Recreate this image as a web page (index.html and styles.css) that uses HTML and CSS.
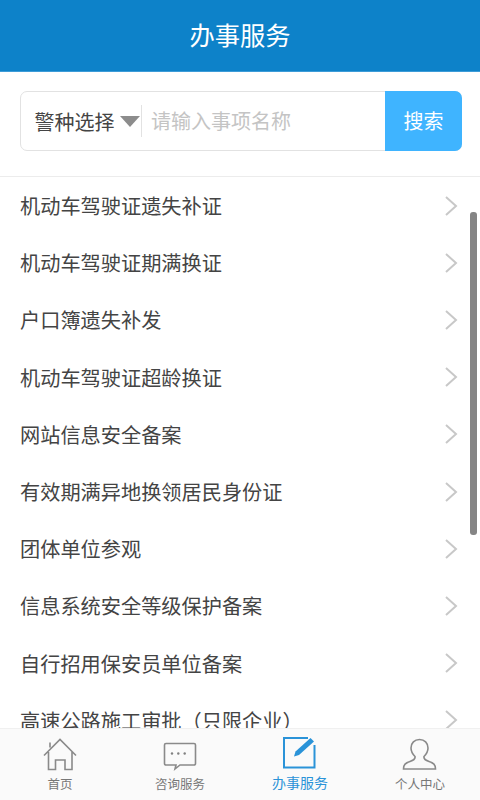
FILE: index.html
```html
<!DOCTYPE html>
<html lang="zh-CN">
<head>
<meta charset="utf-8">
<title>办事服务</title>
<link rel="stylesheet" href="styles.css">
</head>
<body>
<div class="app">
  <header class="topbar">办事服务</header>
  <section class="search-wrap">
    <form class="search">
      <div class="picker">
        <span>警种选择</span>
        <i class="caret"></i>
      </div>
      <div class="placeholder">请输入事项名称</div>
      <div class="search-btn">搜索</div>
    </form>
  </section>
  <ul class="list">
    <li>机动车驾驶证遗失补证<svg class="chev" viewBox="0 0 14 22"><path d="M2 2l10 9-10 9"/></svg></li>
    <li>机动车驾驶证期满换证<svg class="chev" viewBox="0 0 14 22"><path d="M2 2l10 9-10 9"/></svg></li>
    <li>户口簿遗失补发<svg class="chev" viewBox="0 0 14 22"><path d="M2 2l10 9-10 9"/></svg></li>
    <li>机动车驾驶证超龄换证<svg class="chev" viewBox="0 0 14 22"><path d="M2 2l10 9-10 9"/></svg></li>
    <li>网站信息安全备案<svg class="chev" viewBox="0 0 14 22"><path d="M2 2l10 9-10 9"/></svg></li>
    <li>有效期满异地换领居民身份证<svg class="chev" viewBox="0 0 14 22"><path d="M2 2l10 9-10 9"/></svg></li>
    <li>团体单位参观<svg class="chev" viewBox="0 0 14 22"><path d="M2 2l10 9-10 9"/></svg></li>
    <li>信息系统安全等级保护备案<svg class="chev" viewBox="0 0 14 22"><path d="M2 2l10 9-10 9"/></svg></li>
    <li>自行招用保安员单位备案<svg class="chev" viewBox="0 0 14 22"><path d="M2 2l10 9-10 9"/></svg></li>
    <li>高速公路施工审批（只限企业）<svg class="chev" viewBox="0 0 14 22"><path d="M2 2l10 9-10 9"/></svg></li>
  </ul>
  <div class="scrollbar"></div>
  <nav class="tabs">
    <a class="tab">
      <svg class="tab-icon" viewBox="0 0 36 36"><path d="M2 18.500L18 2.500l16 16M8 10.500V5.500M6.500 15V32.500h7V23h9.500v9.500h7V15"/></svg>
      <span>首页</span>
    </a>
    <a class="tab">
      <svg class="tab-icon" viewBox="0 0 36 36"><path d="M4 6.500h28a1.500 1.500 0 0 1 1.500 1.500v18.500a1.500 1.500 0 0 1-1.500 1.500H18l-5 4 1-4H4a1.500 1.500 0 0 1-1.500-1.500V8A1.500 1.500 0 0 1 4 6.500z"/><circle class="dot" cx="10" cy="16.500" r="1.200"/><circle class="dot" cx="16.300" cy="16.500" r="1.200"/><circle class="dot" cx="22.700" cy="16.500" r="1.200"/></svg>
      <span>咨询服务</span>
    </a>
    <a class="tab active">
      <svg class="tab-icon" viewBox="0 0 36 36"><path class="box" d="M26 2H2v29.500h30.500V9"/><path class="pen" d="M12 20.500l1.500-5L28.500 2l3.500 3.500L17 19z"/></svg>
      <span>办事服务</span>
    </a>
    <a class="tab">
      <svg class="tab-icon" viewBox="0 0 36 36"><path d="M1.500 32c0-4.500 2-6 6.500-7.500 3.500-1.200 5.500-2.500 5-5-2.500-2.500-4-5.500-4-8.500C9 6 12.500 2.500 17.500 2.500S26 6 26 11c0 3-1.500 6-4 8.500-.5 2.500 1.500 3.800 5 5C31.500 26 33.500 27.500 33.500 32z"/></svg>
      <span>个人中心</span>
    </a>
  </nav>
</div>
</body>
</html>
```
FILE: styles.css
```css
* { box-sizing: border-box; }
html, body { margin: 0; padding: 0; }
body {
  background: #fff;
  font-family: "Noto Sans CJK SC", "Noto Sans", sans-serif;
  color: #444;
}
.app {
  position: relative;
  width: 480px;
  height: 800px;
  overflow: hidden;
  display: flex;
  flex-direction: column;
}
.topbar {
  flex: none;
  height: 72px;
  background: #0d82c9;
  border-bottom: 1px solid #3d9cd8;
  color: #fff;
  font-size: 25.300px;
  line-height: 68px;
  text-align: center;
}
.search-wrap {
  flex: none;
  height: 105px;
  padding: 19px 18px 0 20px;
  border-bottom: 1px solid #ececec;
}
.search {
  display: flex;
  align-items: stretch;
  height: 60px;
  margin: 0;
  border: 1px solid #e2e2e2;
  border-radius: 7px;
}
.picker {
  flex: none;
  width: 121px;
  padding-left: 13.500px;
  display: flex;
  align-items: center;
  gap: 5.500px;
  font-size: 20px;
  color: #444;
  position: relative;
}
.picker::after {
  content: "";
  position: absolute;
  right: 0;
  top: 13px;
  bottom: 13px;
  width: 1px;
  background: #e2e2e2;
}
.caret {
  width: 0;
  height: 0;
  border-left: 10px solid transparent;
  border-right: 10px solid transparent;
  border-top: 11px solid #8c8c8c;
}
.placeholder {
  flex: 1;
  padding-left: 9px;
  font-size: 20px;
  line-height: 58px;
  color: #c4c4c4;
}
.search-btn {
  flex: none;
  width: 77px;
  margin: -1px -1px -1px 0;
  border-radius: 0 7px 7px 0;
  background: #3fb4ff;
  color: #fff;
  font-size: 20px;
  line-height: 60px;
  text-align: center;
}
.list {
  flex: 1;
  margin: 0;
  padding: 0;
  list-style: none;
  overflow: hidden;
}
.list li {
  height: 57.200px;
  display: flex;
  align-items: center;
  justify-content: space-between;
  padding: 0 22px 0 20px;
  font-size: 20.200px;
  color: #444;
}
.chev {
  width: 14px;
  height: 22px;
  fill: none;
  stroke: #c8c8c8;
  stroke-width: 2;
}
.scrollbar {
  position: absolute;
  left: 470px;
  top: 212px;
  width: 7px;
  height: 323px;
  border-radius: 3px;
  background: #858585;
}
.tabs {
  flex: none;
  height: 72px;
  background: #fafafa;
  border-top: 1px solid #f0f0f0;
  display: flex;
}
.tab {
  flex: 1;
  display: flex;
  flex-direction: column;
  align-items: center;
  padding-top: 8px;
  font-size: 12.500px;
  line-height: 18px;
  color: #777;
}
.tab-icon {
  width: 36px;
  height: 36px;
  margin-bottom: 2px;
  fill: none;
  stroke: #8a8a8a;
  stroke-width: 1.600;
}
.dot { fill: #808080; stroke: none; }
.active { color: #2a93d8; font-size: 14px; padding-top: 7px; }
.active .tab-icon { stroke: #2a93d8; stroke-width: 2; margin-bottom: 1px; }
.active .pen { fill: #2a93d8; stroke: #fafafa; stroke-width: 1.500; paint-order: stroke; }
```
